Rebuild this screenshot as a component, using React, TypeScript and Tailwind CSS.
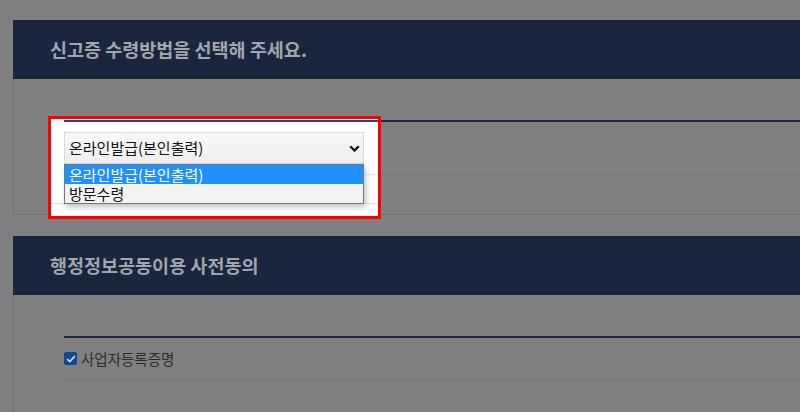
const font = { fontFamily: '"Noto Sans CJK KR", "Noto Sans", sans-serif' };

const Chevron = () => (
	<svg width="11" height="7" viewBox="0 0 11 7" className="shrink-0">
		<path d="M1.2 1.2 L5.5 5.5 L9.8 1.2" fill="none" stroke="#111" strokeWidth="2.3" />
	</svg>
);

const App = () => {
	return (
		<div className="relative h-screen overflow-hidden bg-[#808080] pt-5 pl-[13px]" style={font}>
			{/* 신고증 수령방법 */}
			<section>
				<header className="flex h-[59px] items-center bg-[#1a263e] pl-[37px] text-[18.5px] font-bold text-[#a1a5ad]">
					신고증 수령방법을 선택해 주세요.
				</header>
				<div className="h-[136px] border-l border-b border-[#717171] pl-[50px] pt-[41px]">
					<div className="h-[2px] bg-[#1f2a44]" />
					<div className="border-b border-[#777777] pt-[10px] pb-[10px]">
						<div className="h-8 w-[300px]" />
					</div>
				</div>
			</section>

			{/* 행정정보공동이용 */}
			<section className="mt-[21px]">
				<header className="flex h-[59px] items-center bg-[#1a263e] pl-[37px] text-[18.5px] font-bold text-[#a1a5ad]">
					행정정보공동이용 사전동의
				</header>
				<div className="h-[140px] border-l border-[#717171] pl-[50px] pt-[41px]">
					<div className="h-[2px] bg-[#1f2a44]" />
					<div className="flex h-[42px] items-center gap-1 border-b border-[#777777]">
						<span className="flex h-[13px] w-[13px] items-center justify-center rounded-[2px] bg-[#0d4a9c]">
							<svg width="10" height="8" viewBox="0 0 10 8">
								<path d="M1.2 4.2 L3.8 6.6 L8.8 1.2" fill="none" stroke="#d9d9d9" strokeWidth="1.8" />
							</svg>
						</span>
						<span className="text-[14.5px] text-[#2c2c2c]">사업자등록증명</span>
					</div>
				</div>
			</section>

			{/* highlighted select */}
			<div className="absolute left-[48px] top-[116px] h-[103px] w-[333px] border-[3px] border-[#ff0000] bg-white">
				<div className="pt-px pl-[13px]">
					<div className="h-[2px] bg-[#34456b]" />
					<div className="border-b border-[#e4e4e4] pt-[10px] pb-[10px]">
						<div className="relative w-[300px]">
							<div className="flex h-8 items-center justify-between border border-[#dadada] bg-gradient-to-b from-[#f8f8f8] to-[#efefef] pl-1 pr-[3px] text-[15px] text-[#111]">
								<span>온라인발급(본인출력)</span>
								<Chevron />
							</div>
							<ul className="absolute left-0 top-full z-10 w-[300px] border border-[#767676] bg-[#f3f3f3] text-[15px] leading-[19px] shadow-[2px_3px_6px_rgba(0,0,0,0.25)]">
								<li className="bg-[#1e90ff] pl-1 text-white">온라인발급(본인출력)</li>
								<li className="pl-1 text-[#111]">방문수령</li>
							</ul>
						</div>
					</div>
				</div>
				<div className="mt-[28px] h-px bg-[#e6e6e6]" />
			</div>
		</div>
	);
};

export default App;
